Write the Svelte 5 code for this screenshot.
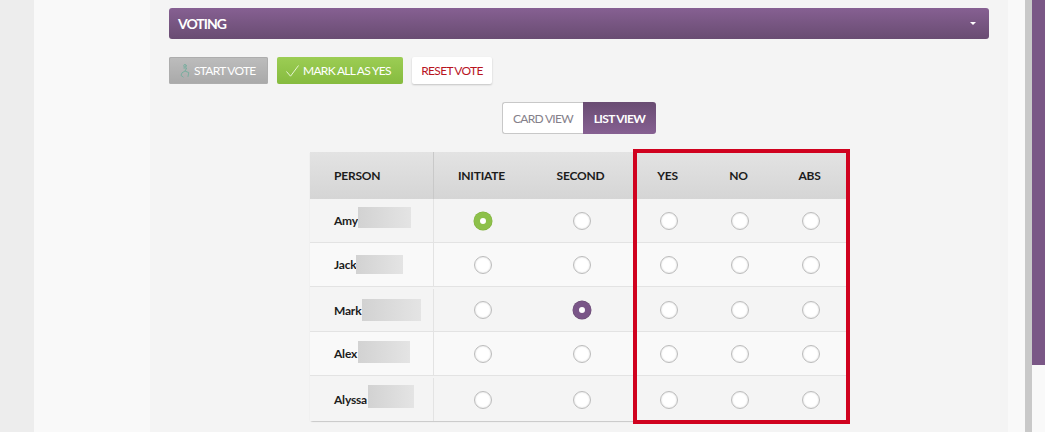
<script>
  const columns = ['INITIATE', 'SECOND', 'YES', 'NO', 'ABS'];
  const people = [
    { name: 'Amy', pick: 0, tone: 'tone-green', blur: 53, blurH: 21, dx: 0, dy: -7 },
    { name: 'Jack', pick: -1, blur: 47, blurH: 19, dx: 0, dy: -1 },
    { name: 'Mark', pick: 1, tone: 'tone-purple', blur: 59, blurH: 22, dx: 1, dy: -1 },
    { name: 'Alex', pick: -1, blur: 52, blurH: 22, dx: 1, dy: -4 },
    { name: 'Alyssa', pick: -1, blur: 46, blurH: 23, dx: 1, dy: -7 }
  ];
</script>

<div class="page">
  <div class="gutter"></div>
  <div class="panel"></div>
  <main class="content">
    <header class="bar">
      <span>VOTING</span>
      <i class="caret"></i>
    </header>

    <div class="actions">
      <button class="btn grey">
        <svg width="11" height="14" viewBox="0 0 11 14" fill="none" stroke="#79ae9f" stroke-width="1" stroke-linecap="round" stroke-linejoin="round">
          <circle cx="5" cy="1.8" r="1.3" />
          <path d="M3.8 4 L6.8 4 L5 7 L8.8 8.6 L8 12.5" />
          <path d="M5 7 L2 8.8 L1 11.4 L3.2 13" />
        </svg>
        <span>START VOTE</span>
      </button>
      <button class="btn green">
        <svg width="13" height="12" viewBox="0 0 13 12" fill="none" stroke="#e6f4d2" stroke-width="1">
          <path d="M0.5 6.5 L4.5 11.2 L12.5 0.5" />
        </svg>
        <span>MARK ALL AS YES</span>
      </button>
      <button class="btn white">RESET VOTE</button>
    </div>

    <div class="toggle">
      <span class="card">CARD VIEW</span>
      <span class="list">LIST VIEW</span>
    </div>

    <div class="table">
      <div class="row head">
        <div class="cell person">PERSON</div>
        {#each columns as c}
          <div class="cell">{c}</div>
        {/each}
      </div>
      {#each people as p, i}
        <div class="row" class:alt={i % 2 === 1}>
          <div class="cell person name">
            <span>{p.name}</span><span class="blur" style="width:{p.blur}px;height:{p.blurH}px;margin-left:{p.dx}px;margin-top:{p.dy}px"></span>
          </div>
          {#each columns as c, j}
            <div class="cell">
              <span class="radio {p.pick === j ? p.tone : ''}"></span>
            </div>
          {/each}
        </div>
      {/each}
      <div class="highlight"></div>
    </div>
  </main>
  <div class="panel right"></div>
  <div class="track"></div>
  <div class="scroll"><div class="thumb"></div></div>
</div>

<style>
  :global(body) {
    margin: 0;
    background: #f9f9f9;
  }
  .page {
    display: grid;
    grid-template-columns: 34px 116px 858px 17px 7px 13px;
    height: 432px;
    overflow: hidden;
    font-family: Lato, "Open Sans", sans-serif;
    font-size: 12px;
    color: #1c1c1c;
  }
  .gutter { background: #ededed; }
  .panel { background: #f9f9f9; }
  .track { background: #c9c9c9; }
  .scroll { background: #f9f9f9; }
  .thumb { height: 365px; background: #7a5786; }
  .content {
    background: #f4f4f4;
    padding: 8px 19px 0;
    display: flex;
    flex-direction: column;
  }
  .bar {
    height: 31px;
    flex: none;
    box-sizing: border-box;
    background: linear-gradient(#866092, #694c72);
    border-radius: 3px;
    display: flex;
    align-items: center;
    justify-content: space-between;
    padding: 0 12px 1px 9px;
    color: #fff;
    font-size: 14px;
    font-weight: 700;
    letter-spacing: -1px;
  }
  .caret {
    width: 0;
    height: 0;
    border-left: 3px solid transparent;
    border-right: 3px solid transparent;
    border-top: 3px solid #fff;
    margin-right: 1px;
  }
  .actions {
    display: flex;
    gap: 9px;
    margin-top: 18px;
    flex: none;
  }
  .btn {
    height: 27px;
    box-sizing: border-box;
    border: 0;
    border-radius: 2px;
    display: flex;
    align-items: center;
    justify-content: flex-start;
    font-family: inherit;
    font-size: 12px;
    letter-spacing: -0.7px;
    padding: 0;
  }
  .grey {
    width: 99px;
    gap: 3px;
    padding-left: 11px;
    color: #fff;
    background: linear-gradient(#bdbdbd, #a9a9a9);
    box-shadow: inset 0 0 0 1px #adadad;
  }
  .green {
    width: 126px;
    gap: 4px;
    padding-left: 9px;
    color: #fff;
    background: linear-gradient(#9ccd54, #86bb3f);
  }
  .white {
    width: 80px;
    justify-content: center;
    color: #b8141f;
    background: #fff;
    box-shadow: 0 1px 2px rgba(0, 0, 0, 0.2);
  }
  .toggle {
    align-self: center;
    display: flex;
    margin-top: 18px;
    height: 32px;
    flex: none;
    letter-spacing: -0.7px;
  }
  .toggle span {
    display: flex;
    align-items: center;
    justify-content: center;
    box-sizing: border-box;
  }
  .card {
    width: 81px;
    background: #fff;
    color: #85808a;
    border: 1px solid #c8c8c8;
    border-right: 0;
    border-radius: 3px 0 0 3px;
  }
  .list {
    width: 73px;
    background: linear-gradient(#694c72, #866092);
    color: #fff;
    font-weight: 700;
    letter-spacing: -0.6px;
    border-radius: 0 3px 3px 0;
  }
  .table {
    position: relative;
    align-self: flex-start;
    width: 537px;
    margin: 18px 0 0 141px;
    flex: none;
    border-radius: 0 0 3px 3px;
    box-shadow: 0 1px 1px #c8c8c8;
  }
  .row {
    display: grid;
    grid-template-columns: 124px 99px 101px 71px 71px 71px;
    height: 44px;
    box-sizing: border-box;
    background: #f4f4f4;
    border-bottom: 1px solid #e3e3e3;
  }
  .row:nth-child(4) { height: 45px; padding-top: 2px; }
  .row:nth-child(6) { height: 45px; padding-top: 2px; border-bottom: 0; }
  .alt { background: #f9f9f9; }
  .row.head {
    height: 47px;
    border-bottom: 0;
    background: linear-gradient(#e3e3e3, #d5d5d5);
    font-weight: 700;
    letter-spacing: -0.2px;
  }
  .row.head > .cell:not(.person) { padding-right: 4px; }
  .row.head > .cell:nth-child(3) { padding-right: 6px; }
  .row.head > .person { border-right-color: #c9c9c9; }
  .cell {
    display: flex;
    align-items: center;
    justify-content: center;
    box-sizing: border-box;
  }
  .cell:nth-child(3) { padding-right: 2px; }
  .person {
    justify-content: flex-start;
    padding-left: 24px;
    border-right: 1px solid #e3e3e3;
  }
  .name {
    font-weight: 700;
    letter-spacing: -0.2px;
  }
  .blur {
    display: block;
    background: linear-gradient(90deg, #d2d2d2, #e4e4e4);
  }
  .radio {
    width: 18px;
    height: 18px;
    margin-right: 1px;
    box-sizing: border-box;
    border-radius: 50%;
    background: #fff;
    border: 1px solid #bcbcbc;
    box-shadow: inset 0 0 2px #d0d0d0;
  }
  .tone-green, .tone-purple {
    box-shadow: 0 0 0 0.5px #7fb03a;
    border: 6px solid #8dc04a;
  }
  .tone-purple {
    border-color: #7a5688;
    box-shadow: 0 0 0 0.5px #694c72;
  }
  .highlight {
    position: absolute;
    left: 323px;
    top: -3px;
    width: 217px;
    height: 275px;
    box-sizing: border-box;
    border: 4px solid #d0021f;
    pointer-events: none;
  }
</style>
